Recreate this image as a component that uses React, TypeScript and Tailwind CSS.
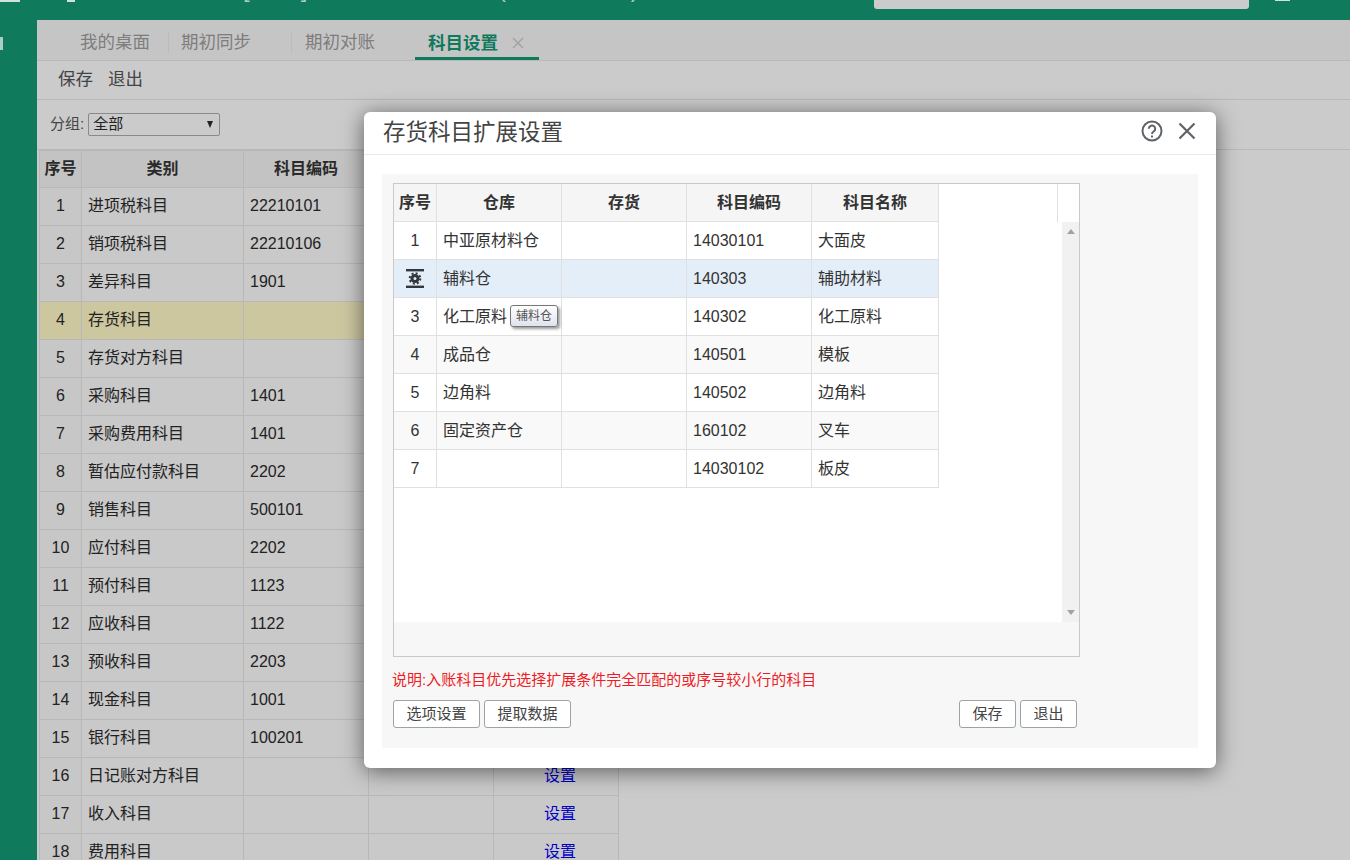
const font = `font-['Liberation_Sans','Noto_Sans_CJK_SC',sans-serif]`;

const subjects: [string, string][] = [
  ["进项税科目", "22210101"],
  ["销项税科目", "22210106"],
  ["差异科目", "1901"],
  ["存货科目", ""],
  ["存货对方科目", ""],
  ["采购科目", "1401"],
  ["采购费用科目", "1401"],
  ["暂估应付款科目", "2202"],
  ["销售科目", "500101"],
  ["应付科目", "2202"],
  ["预付科目", "1123"],
  ["应收科目", "1122"],
  ["预收科目", "2203"],
  ["现金科目", "1001"],
  ["银行科目", "100201"],
  ["日记账对方科目", ""],
  ["收入科目", ""],
  ["费用科目", ""],
];

const stockRows: [string, string, string][] = [
  ["中亚原材料仓", "14030101", "大面皮"],
  ["辅料仓", "140303", "辅助材料"],
  ["化工原料", "140302", "化工原料"],
  ["成品仓", "140501", "模板"],
  ["边角料", "140502", "边角料"],
  ["固定资产仓", "160102", "叉车"],
  ["", "14030102", "板皮"],
];

function RowGear() {
  return (
    <svg width="18" height="19" viewBox="0 0 18 19" fill="none">
      <rect x="0" y="0" width="18" height="2.4" fill="#33363b" />
      <rect x="0" y="16.6" width="18" height="2.4" fill="#33363b" />
      <circle cx="9" cy="9.5" r="3" stroke="#33363b" strokeWidth="3" />
      <circle cx="9" cy="9.5" r="5.3" stroke="#33363b" strokeWidth="2" strokeDasharray="2 2.16" />
    </svg>
  );
}

function SubjectTable() {
  const head = "flex h-[37px] items-center justify-center whitespace-nowrap border-r border-b border-[#b8b8b8]";
  const cell = "flex h-[38px] items-center whitespace-nowrap border-r border-b border-[#b8b8b8] px-[6px] pb-[1px]";
  return (
    <div className="ml-[2px] w-[580px] text-[16px] text-[#222]">
      <div className="grid grid-cols-[43px_162px_125px_125px_125px] border-t border-[#b8b8b8] bg-[#c3c3c3] font-bold text-[#2a2a2a]">
        <div className={`${head} border-l`}>序号</div>
        <div className={head}>类别</div>
        <div className={head}>科目编码</div>
        <div className={head}>科目名称</div>
        <div className={head}>操作</div>
      </div>
      {subjects.map(([name, code], i) => (
        <div
          key={name}
          className={`grid grid-cols-[43px_162px_125px_125px_125px] ${i === 3 ? "bg-[#cdc7a0]" : "bg-[#c9c9c9]"}`}
        >
          <div className={`${cell} justify-center border-l px-0 ${i === 3 ? "" : "bg-[#c7c7c7]"}`}>{i + 1}</div>
          <div className={cell}>{name}</div>
          <div className={cell}>{code}</div>
          <div className={cell} />
          {/* rows above 16 sit behind the dialog */}
          <div className={`${cell} pl-[50px] text-[#0000c8]`}>{i >= 15 ? "设置" : ""}</div>
        </div>
      ))}
    </div>
  );
}

function StockGrid() {
  const cell = "flex h-[38px] items-center whitespace-nowrap border-r border-b border-[#e0e0e0] px-[6px]";
  return (
    <div className="flex h-[474px] w-[687px] flex-col border border-[#c9c9c9] bg-white text-[16px] text-[#333]">
      <div className="flex">
        <div className="grid grid-cols-[43px_125px_125px_125px_127px] bg-[#f5f5f5] font-bold">
          <div className={`${cell} justify-center px-0 pt-[1px]`}>序号</div>
          <div className={`${cell} justify-center pt-[1px]`}>仓库</div>
          <div className={`${cell} justify-center pt-[1px]`}>存货</div>
          <div className={`${cell} justify-center pt-[1px]`}>科目编码</div>
          <div className={`${cell} justify-center pt-[1px]`}>科目名称</div>
        </div>
        <div className="ml-[118px] h-[38px] border-l border-[#e0e0e0]" />
      </div>
      <div className="flex h-[400px]">
        <div className="flex-1">
          {stockRows.map(([wh, code, name], i) => (
            <div
              key={code}
              className={`grid w-[545px] grid-cols-[43px_125px_125px_125px_127px] ${
                i === 1 ? "bg-[#e3eef9]" : i % 2 === 1 ? "bg-[#f9f9f9]" : "bg-white"
              }`}
            >
              <div className={`${cell} justify-center px-0`}>{i === 1 ? <RowGear /> : i + 1}</div>
              <div className={`${cell} relative`}>
                {wh}
                {i === 2 && (
                  <div className="absolute left-[73px] top-[7px] flex h-[22px] w-[48px] items-center justify-center rounded-[3px] border border-[#777] bg-gradient-to-b from-white to-[#dfe3ee] text-[12px] text-[#555] shadow-[2px_2px_3px_rgba(0,0,0,0.4)]">
                    辅料仓
                  </div>
                )}
              </div>
              <div className={cell} />
              <div className={cell}>{code}</div>
              <div className={cell}>{name}</div>
            </div>
          ))}
        </div>
        <div className="flex w-[17px] flex-col items-center justify-between bg-[#f1f1f1] py-[7px]">
          <div className="h-0 w-0 border-x-[4px] border-b-[5px] border-x-transparent border-b-[#a3a3a3]" />
          <div className="h-0 w-0 border-x-[4px] border-t-[5px] border-x-transparent border-t-[#a3a3a3]" />
        </div>
      </div>
      <div className="flex-1 bg-[#f7f7f7]" />
    </div>
  );
}

function Btn({ label, w }: { label: string; w: string }) {
  return (
    <button className={`h-[28px] ${w} rounded-[3px] border border-[#9aa3a8] bg-white text-[15px] text-[#444]`}>
      {label}
    </button>
  );
}

function Modal() {
  return (
    <div className="absolute left-[364px] top-[112px] flex h-[656px] w-[852px] flex-col rounded-[6px] bg-white shadow-[0_3px_22px_rgba(0,0,0,0.55)]">
      <div className="flex h-[43px] items-center justify-between border-b border-[#e8e8e8] pl-[19px] pr-[20px]">
        <span className="text-[22.5px] leading-none text-[#444]">存货科目扩展设置</span>
        <div className="flex items-center gap-[15px] pb-[5px]">
          <svg width="22" height="22" viewBox="0 0 22 22" fill="none" stroke="#5f6368">
            <circle cx="11" cy="11" r="9.5" strokeWidth="2" />
            <path d="M7.8 8.8a3.2 3.2 0 1 1 4.9 2.7c-1.1.7-1.7 1.2-1.7 2.4" strokeWidth="2" />
            <path d="M11 15.4v2" strokeWidth="2" />
          </svg>
          <svg width="18" height="18" viewBox="0 0 18 18" fill="none" stroke="#5f6368" strokeWidth="2.2">
            <path d="M1.5 1.5l15 15M16.5 1.5l-15 15" />
          </svg>
        </div>
      </div>
      <div className="mx-[18px] mt-[19px] h-[574px] bg-[#f7f7f7] pl-[11px] pt-[9px]">
        <StockGrid />
        <p className="mt-[14px] -ml-[1px] text-[15px] leading-[18px] text-[#ee1c25]">
          说明:入账科目优先选择扩展条件完全匹配的或序号较小行的科目
        </p>
        <div className="mt-[11px] flex w-[684px] items-center gap-[4px]">
          <Btn label="选项设置" w="w-[87px]" />
          <Btn label="提取数据" w="w-[87px]" />
          <div className="flex-1" />
          <Btn label="保存" w="w-[57px]" />
          <Btn label="退出" w="w-[57px]" />
        </div>
      </div>
    </div>
  );
}

export default function App() {
  return (
    <div className={`relative flex h-[860px] w-[1350px] flex-col overflow-hidden bg-[#0f7a5c] ${font}`}>
      <header className="flex h-[20px] shrink-0 items-start overflow-hidden">
        <div className="ml-0 h-[2px] w-[20px] bg-[#cfe3dc]" />
        <div className="ml-[47px] h-[2px] w-[8px] bg-[#cfe3dc]" />
        <div className="-mt-[24px] ml-[168px] w-[400px] whitespace-nowrap text-[24px] leading-[25px] tracking-[1px] text-[#a9cfc2]">
          [测试] 财务软件 - 账套 (2018-2019)
        </div>
        <div className="ml-[231px] h-[9px] w-[375px] rounded-b-[3px] bg-[#cbcbcb]" />
        <div className="ml-[26px] h-[1px] w-[15px] bg-[#cfe3dc]" />
      </header>
      <div className="flex min-h-0 flex-1">
        <aside className="w-[37px] shrink-0 pt-[17px]">
          <div className="h-[13px] w-[3px] bg-[#a9cfc2]" />
        </aside>
        <main className="min-w-0 flex-1 overflow-hidden bg-[#cbcbcb]">
          <div className="flex h-[41px] items-start border-b border-[#b8b8b8] bg-[#c6c5c6] pl-[43px] text-[17.5px] text-[#7d7d7d]">
            <div className="flex h-[39px] items-center pr-[18px] pt-[6px]">我的桌面</div>
            <div className="mt-[12px] flex h-[21px] w-[123px] items-center border-l border-[#bcbcbc] pl-[12px]">期初同步</div>
            <div className="mt-[12px] flex h-[21px] w-[124px] items-center border-l border-[#bcbcbc] pl-[13px]">期初对账</div>
            <div className="flex h-[40px] w-[124px] items-center gap-[14px] border-b-[3px] border-[#0f7a5c] pl-[13px] pt-[9px] font-bold text-[#0f7a5c]">
              科目设置
              <svg width="12" height="12" viewBox="0 0 12 12" fill="none" stroke="#a3a3a3" strokeWidth="1.5">
                <path d="M1 1l10 10M11 1L1 11" />
              </svg>
            </div>
          </div>
          <div className="flex h-[39px] items-center gap-[15px] border-b border-[#b8b8b8] pb-[2px] pl-[21px] text-[17.5px] text-[#444]">
            <span>保存</span>
            <span>退出</span>
          </div>
          <div className="flex h-[50px] items-center border-b border-[#b8b8b8] pl-[13px] text-[15px] text-[#444]">
            <span>分组:</span>
            <div className="ml-[4px] flex h-[23px] w-[132px] items-center justify-between rounded-[2px] border border-[#8a8a8a] pl-[4px] pr-[6px] text-[15px] text-[#222]">
              全部
              <span className="h-0 w-0 border-x-[3.5px] border-t-[7px] border-x-transparent border-t-[#222]" />
            </div>
          </div>
          <SubjectTable />
        </main>
      </div>
      <Modal />
    </div>
  );
}
